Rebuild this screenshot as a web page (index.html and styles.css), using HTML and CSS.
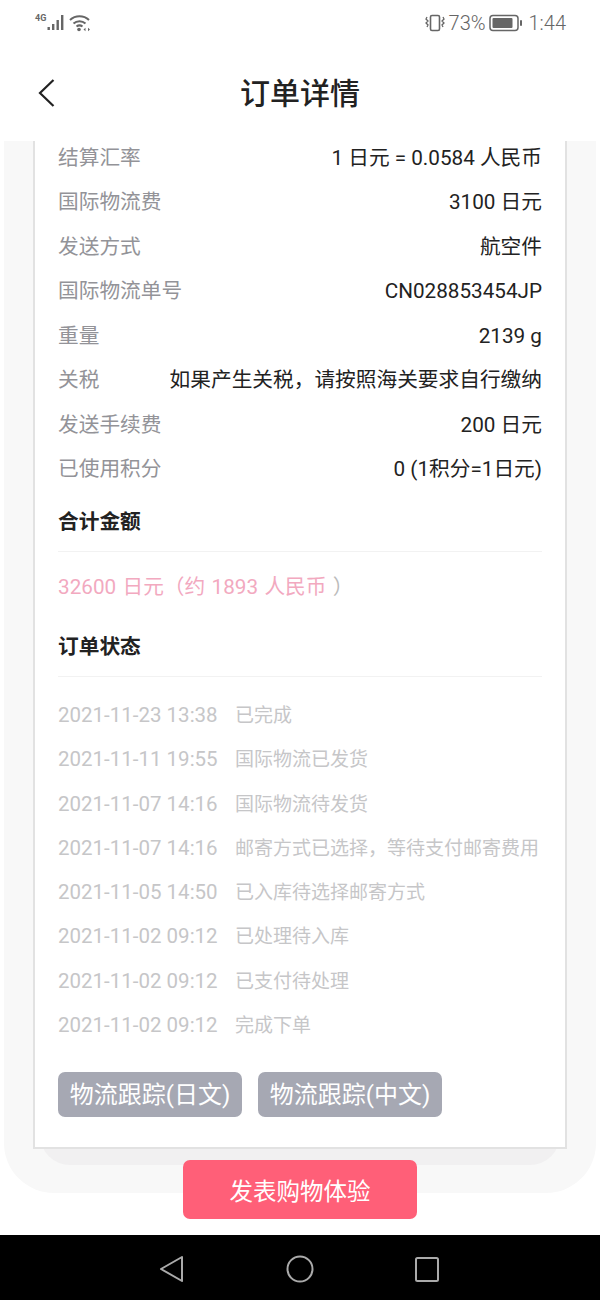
FILE: index.html
```html
<!DOCTYPE html>
<html lang="zh-CN">
<head>
  <meta charset="UTF-8">
  <meta name="viewport" content="width=device-width, initial-scale=1.0">
  <title>订单详情</title>
  <link rel="stylesheet" href="styles.css">
</head>
<body>

  <div class="status-bar">
    <div class="status-left">
      <span class="net-label">4G</span>
      <svg class="icon-signal" width="18" height="18" viewBox="0 0 18 18">
        <rect x="0.5" y="13" width="2.4" height="3" fill="#666"/>
        <rect x="5" y="10" width="2.4" height="6" fill="#666"/>
        <rect x="9.5" y="6" width="2.4" height="10" fill="#666"/>
        <rect x="14" y="1" width="2.4" height="15" fill="#666"/>
      </svg>
      <svg class="icon-wifi" width="22" height="18" viewBox="0 0 22 18">
        <path d="M1 6 A14 14 0 0 1 20 6" fill="none" stroke="#666" stroke-width="2"/>
        <path d="M4.5 9.5 A9 9 0 0 1 16.5 9.5" fill="none" stroke="#666" stroke-width="2"/>
        <path d="M7.5 12.5 A5 5 0 0 1 13.5 12.5" fill="none" stroke="#666" stroke-width="2"/>
        <circle cx="10" cy="15.5" r="1.8" fill="#666"/>
        <path d="M14.5 15.5l2-1.8v3.6zM21 15.5l-2-1.8v3.6z" fill="#666"/>
      </svg>
    </div>
    <div class="status-right">
      <svg class="icon-vibrate" width="20" height="18" viewBox="0 0 20 18">
        <rect x="5.5" y="1.5" width="9" height="15" rx="1.5" fill="none" stroke="#666" stroke-width="1.6"/>
        <path d="M2 3l-1 2 2 2-2 2 2 2-1 2M18 3l1 2-2 2 2 2-2 2 1 2" fill="none" stroke="#666" stroke-width="1.3"/>
      </svg>
      <span class="status-text">73%</span>
      <svg class="icon-battery" width="34" height="18" viewBox="0 0 34 18">
        <rect x="1" y="1.5" width="28" height="15" rx="3" fill="none" stroke="#666" stroke-width="1.5"/>
        <rect x="3.5" y="4" width="20" height="10" rx="1" fill="#666"/>
        <rect x="31" y="6" width="2" height="6" rx="1" fill="#666"/>
      </svg>
      <span class="status-text status-time">1:44</span>
    </div>
  </div>

  <header class="title-bar">
    <svg class="back-icon" width="20" height="30" viewBox="0 0 20 30">
      <path d="M16.5 2 L3 15 L16.5 28" fill="none" stroke="#222" stroke-width="2.2"/>
    </svg>
    <h1>订单详情</h1>
  </header>

  <main class="panel">
    <div class="panel-shadow">
      <div class="card">
        <div class="info-list">
          <div class="info-row"><span class="info-label">结算汇率</span><span class="info-value">1 日元 = 0.0584 人民币</span></div>
          <div class="info-row"><span class="info-label">国际物流费</span><span class="info-value">3100 日元</span></div>
          <div class="info-row"><span class="info-label">发送方式</span><span class="info-value">航空件</span></div>
          <div class="info-row"><span class="info-label">国际物流单号</span><span class="info-value">CN028853454JP</span></div>
          <div class="info-row"><span class="info-label">重量</span><span class="info-value">2139 g</span></div>
          <div class="info-row"><span class="info-label">关税</span><span class="info-value">如果产生关税，请按照海关要求自行缴纳</span></div>
          <div class="info-row"><span class="info-label">发送手续费</span><span class="info-value">200 日元</span></div>
          <div class="info-row"><span class="info-label">已使用积分</span><span class="info-value">0 (1积分=1日元)</span></div>
        </div>

        <h2 class="section-title">合计金额</h2>
        <p class="total"><span class="total-pink">32600 日元（约 1893 人民币</span> <span class="total-end">）</span></p>

        <h2 class="section-title section-status">订单状态</h2>
        <ul class="timeline">
          <li><span class="time">2021-11-23 13:38</span><span>已完成</span></li>
          <li><span class="time">2021-11-11 19:55</span><span>国际物流已发货</span></li>
          <li><span class="time">2021-11-07 14:16</span><span>国际物流待发货</span></li>
          <li><span class="time">2021-11-07 14:16</span><span>邮寄方式已选择，等待支付邮寄费用</span></li>
          <li><span class="time">2021-11-05 14:50</span><span>已入库待选择邮寄方式</span></li>
          <li><span class="time">2021-11-02 09:12</span><span>已处理待入库</span></li>
          <li><span class="time">2021-11-02 09:12</span><span>已支付待处理</span></li>
          <li><span class="time">2021-11-02 09:12</span><span>完成下单</span></li>
        </ul>

        <div class="track-buttons">
          <button class="track-button">物流跟踪(日文)</button>
          <button class="track-button">物流跟踪(中文)</button>
        </div>
      </div>
    </div>
  </main>

  <div class="action-bar">
    <button class="action-button">发表购物体验</button>
  </div>

  <nav class="nav-bar">
    <svg width="28" height="30" viewBox="0 0 28 30">
      <path d="M24 3 L3 15 L24 27 Z" fill="none" stroke="#aaa" stroke-width="2" stroke-linejoin="round"/>
    </svg>
    <svg width="28" height="28" viewBox="0 0 28 28">
      <circle cx="14" cy="14" r="12.5" fill="none" stroke="#aaa" stroke-width="2"/>
    </svg>
    <svg width="26" height="26" viewBox="0 0 26 26">
      <rect x="2" y="2" width="22" height="23" rx="1.5" fill="none" stroke="#aaa" stroke-width="2"/>
    </svg>
  </nav>

</body>
</html>
```

FILE: styles.css
```css
:root {
  --fonte: Roboto, "Noto Sans CJK SC", sans-serif;
  --texto: #222;
  --cinza: #939398;
  --claro: #c6c6c8;
}

* {
  box-sizing: border-box;
}

body {
  margin: 0;
  width: 600px;
  height: 1300px;
  overflow: hidden;
  background-color: #fff;
  color: var(--texto);
  font-family: var(--fonte);
  font-size: 20.7px;
  display: flex;
  flex-direction: column;
}

/* status bar */
.status-bar {
  height: 50px;
  flex-shrink: 0;
  padding: 0 34px 4px 35px;
  display: flex;
  justify-content: space-between;
  align-items: center;
  color: #666;
}

.status-left,
.status-right {
  display: flex;
  align-items: center;
}

.net-label {
  font-size: 9px;
  font-weight: bold;
  margin-bottom: 10px;
  margin-right: 1px;
}

.icon-wifi {
  margin-left: 4px;
}

.status-text {
  font-size: 20px;
  font-weight: 300;
}

.icon-vibrate {
  margin-right: 4px;
}

.icon-battery {
  margin: 0 6px 0 3px;
}

/* title */
.title-bar {
  height: 91px;
  flex-shrink: 0;
  padding-left: 37px;
  padding-bottom: 10px;
  position: relative;
  display: flex;
  align-items: center;
  background-color: #fff;
}

.back-icon {
  margin-top: 5px;
}

.title-bar h1 {
  margin: 0;
  flex: 1;
  padding-right: 57px;
  text-align: center;
  font-size: 30px;
  font-weight: 500;
}

/* panel and card */
.panel {
  height: 1052px;
  flex-shrink: 0;
  margin: 0 4px;
  background-color: #f8f8f8;
  border-radius: 0 0 50px 50px;
}

.panel-shadow {
  margin: 0 36px;
  height: 1024px;
  background-color: #f1f0f1;
  border-radius: 0 0 30px 30px;
}

.card {
  margin: 0 -7px;
  height: 1008px;
  padding: 0 23px;
  overflow: hidden;
  background-color: #fff;
  border: 2px solid #e2e2e2;
  border-top: 0;
}

.info-row {
  height: 44.5px;
  line-height: 44px;
  display: flex;
  justify-content: space-between;
  align-items: baseline;
}

.info-list {
  margin-top: -5.5px;
}

.info-label {
  color: var(--cinza);
}

.section-title {
  margin: 0;
  height: 60.5px;
  padding-top: 15px;
  border-bottom: 1px solid #f2f2f2;
  font-size: 20.7px;
  font-weight: 700;
  line-height: 30px;
}

.total {
  margin: 0;
  height: 70px;
  line-height: 70px;
  color: #f2a9bf;
  word-spacing: 1.2px;
}

.total-end {
  color: #bbb;
}

.section-status {
  height: 55px;
  padding-top: 10px;
}

.timeline {
  list-style: none;
  margin: 0;
  padding: 16px 0 0;
  color: var(--claro);
}

.timeline li {
  height: 44.3px;
  line-height: 44px;
  display: flex;
  align-items: baseline;
  font-size: 19px;
  white-space: nowrap;
}

.time {
  width: 177px;
  flex-shrink: 0;
  font-size: 20.5px;
}

.track-buttons {
  margin-top: 25px;
  display: flex;
  gap: 16px;
}

.track-button {
  width: 184px;
  height: 45px;
  padding: 0 0 4px;
  border: none;
  border-radius: 7px;
  background-color: #a6a8b3;
  color: #fff;
  font-family: var(--fonte);
  font-size: 24px;
}

/* bottom action */
.action-bar {
  height: 75px;
  margin-top: -33px;
  flex-shrink: 0;
  position: relative;
  display: flex;
  justify-content: center;
}

.action-button {
  width: 234px;
  height: 59px;
  border: none;
  border-radius: 7px;
  background-color: #ff5f78;
  color: #fff;
  font-family: var(--fonte);
  font-size: 23.5px;
}

/* nav */
.nav-bar {
  flex: 1;
  padding-top: 2px;
  padding-right: 3px;
  background-color: #000;
  display: flex;
  justify-content: center;
  align-items: center;
  gap: 100px;
}
```
